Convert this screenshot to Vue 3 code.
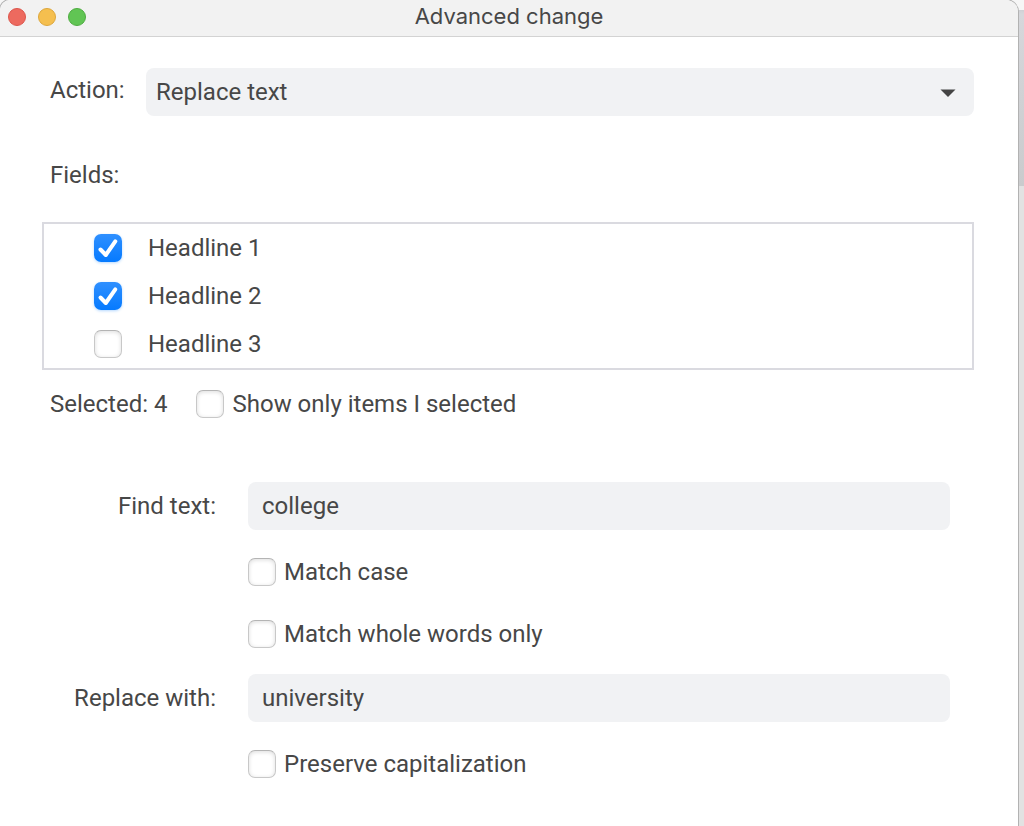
<script setup>
import { ref, reactive } from 'vue'

const action = ref('Replace text')
const fields = reactive([
  { id: 'headline-1', label: 'Headline 1', checked: true },
  { id: 'headline-2', label: 'Headline 2', checked: true },
  { id: 'headline-3', label: 'Headline 3', checked: false },
])
const selectedCount = ref(4)
const onlySelected = ref(false)
const findText = ref('college')
const matchCase = ref(false)
const wholeWords = ref(false)
const replaceWith = ref('university')
const preserveCaps = ref(false)
</script>

<template>
  <div class="desktop">
    <main class="window">
      <header class="titlebar">
        <div class="lights">
          <button class="light close" type="button" aria-label="Close"></button>
          <button class="light minimize" type="button" aria-label="Minimize"></button>
          <button class="light zoom" type="button" aria-label="Zoom"></button>
        </div>
        <h1 class="title">Advanced change</h1>
      </header>

      <form class="content" @submit.prevent>
        <div class="action-row">
          <label class="action-label" for="action">Action:</label>
          <div class="select-box">
            <select id="action" v-model="action">
              <option>Replace text</option>
            </select>
            <svg class="arrow" viewBox="0 0 16 8" aria-hidden="true">
              <path d="M0.500 0.500h15L8 8z" fill="#444" />
            </svg>
          </div>
        </div>

        <h2 class="fields-label" id="fields-label">Fields:</h2>

        <div class="list" role="group" aria-labelledby="fields-label">
          <label v-for="field in fields" :key="field.id" class="list-row" :for="field.id">
            <span class="tick">
              <input :id="field.id" v-model="field.checked" type="checkbox" />
              <svg viewBox="0 0 28 28" aria-hidden="true"><path d="M6.500 15.500L11.800 21L21.300 7.300" /></svg>
            </span>
            {{ field.label }}
          </label>
        </div>

        <div class="selected-row">
          <span>Selected: {{ selectedCount }}</span>
          <label class="check" for="only-selected">
            <span class="tick">
              <input id="only-selected" v-model="onlySelected" type="checkbox" />
              <svg viewBox="0 0 28 28" aria-hidden="true"><path d="M6.500 15.500L11.800 21L21.300 7.300" /></svg>
            </span>
            Show only items I selected
          </label>
        </div>

        <div class="form-grid">
          <label class="form-label" for="find-text">Find text:</label>
          <input id="find-text" v-model="findText" class="text-input" type="text" />
          <div class="options">
            <label class="check" for="match-case">
              <span class="tick">
                <input id="match-case" v-model="matchCase" type="checkbox" />
                <svg viewBox="0 0 28 28" aria-hidden="true"><path d="M6.500 15.500L11.800 21L21.300 7.300" /></svg>
              </span>
              Match case
            </label>
            <label class="check" for="whole-words">
              <span class="tick">
                <input id="whole-words" v-model="wholeWords" type="checkbox" />
                <svg viewBox="0 0 28 28" aria-hidden="true"><path d="M6.500 15.500L11.800 21L21.300 7.300" /></svg>
              </span>
              Match whole words only
            </label>
          </div>

          <label class="form-label" for="replace-with">Replace with:</label>
          <input id="replace-with" v-model="replaceWith" class="text-input" type="text" />
          <div class="options">
            <label class="check" for="preserve-caps">
              <span class="tick">
                <input id="preserve-caps" v-model="preserveCaps" type="checkbox" />
                <svg viewBox="0 0 28 28" aria-hidden="true"><path d="M6.500 15.500L11.800 21L21.300 7.300" /></svg>
              </span>
              Preserve capitalization
            </label>
          </div>
        </div>
      </form>
    </main>
  </div>
</template>

<style>
body {
  margin: 0;
  background: #e4e4e4;
}
</style>

<style scoped>
.desktop {
  box-sizing: border-box;
  min-height: 100vh;
  padding-right: 6px;
  display: flex;
  background: linear-gradient(#f6f6f6 10px, #cfd0d4 10px, #d6d7db 14px, #cacbcd 186px, #e2e2e2 186px);
  font-family: Roboto, "Liberation Sans", sans-serif;
  font-size: 24px;
  line-height: 28px;
  color: #474747;
}

.window {
  flex: 1;
  min-width: 0;
  background: #fff;
  border-radius: 10px 12px 0 0;
  box-shadow: 0 0 0 1px #b2b2b2;
  overflow: hidden;
}

.titlebar {
  box-sizing: border-box;
  height: 37px;
  padding: 0 8px 2px;
  display: grid;
  grid-template-columns: 1fr auto 1fr;
  align-items: center;
  background: #f2f2f2;
  border-bottom: 1px solid #d3d3d3;
}

.lights {
  display: flex;
  gap: 12px;
}

.light {
  box-sizing: border-box;
  width: 18px;
  height: 18px;
  padding: 0;
  border: 1px solid;
  border-radius: 50%;
}

.close {
  background: #ed6a5f;
  border-color: #dc554b;
}

.minimize {
  background: #f5bf4f;
  border-color: #dca63b;
}

.zoom {
  background: #61c554;
  border-color: #4eac41;
}

.title {
  margin: 0;
  padding-bottom: 2px;
  font-family: Inter, "Liberation Sans", sans-serif;
  font-size: 22px;
  line-height: 28px;
  font-weight: 400;
}

.content {
  padding: 31px 44px 48px 42px;
}

.action-row {
  display: flex;
  align-items: center;
}

.action-label {
  box-sizing: border-box;
  width: 104px;
  padding: 0 0 4px 8px;
}

.select-box {
  flex: 1;
  display: grid;
  align-items: center;
}

.select-box > * {
  grid-area: 1 / 1;
}

select {
  appearance: none;
  width: 100%;
  height: 48px;
  margin: 0;
  padding: 0 48px 0 10px;
  border: 0;
  border-radius: 8px;
  background: #f1f2f4;
  color: inherit;
  font: inherit;
}

.arrow {
  width: 16px;
  height: 8px;
  justify-self: end;
  margin: 2px 18px 0 0;
  pointer-events: none;
}

.fields-label {
  margin: 45px 0 33px;
  padding-left: 8px;
  font-size: 24px;
  font-weight: 400;
}

.list {
  border: 2px solid #dadae0;
}

.list-row {
  height: 48px;
  padding-left: 50px;
  display: flex;
  align-items: center;
  gap: 26px;
}

.tick {
  flex: none;
  width: 28px;
  height: 28px;
  display: grid;
}

.tick > * {
  grid-area: 1 / 1;
}

.tick input {
  appearance: none;
  box-sizing: border-box;
  width: 28px;
  height: 28px;
  margin: 0;
  border: 1px solid #c8c8c8;
  border-top-color: #b4b4b4;
  border-radius: 7px;
  background: #fff;
  box-shadow: inset 0 1px 4px #dcdcdc;
}

.tick input:checked {
  border: 0;
  background: linear-gradient(#2f90ff, #057aff);
  box-shadow: 0 1px 3px #b5d8ff;
}

.tick svg {
  width: 28px;
  height: 28px;
  visibility: hidden;
  pointer-events: none;
  fill: none;
  stroke: #fff;
  stroke-width: 4;
  stroke-linecap: round;
  stroke-linejoin: round;
}

.tick input:checked + svg {
  visibility: visible;
}

.selected-row {
  display: flex;
  align-items: center;
  gap: 29px;
  padding: 20px 0 0 8px;
}

.check {
  display: flex;
  align-items: center;
  gap: 8px;
}

.form-grid {
  margin: 64px 24px 0 0;
  display: grid;
  grid-template-columns: 174px 1fr;
  column-gap: 32px;
  align-items: center;
}

.form-label {
  text-align: right;
}

.text-input {
  box-sizing: border-box;
  width: 100%;
  height: 48px;
  padding: 0 14px;
  border: 0;
  border-radius: 8px;
  background: #f1f2f4;
  color: inherit;
  font: inherit;
}

.options {
  grid-column: 2;
  display: flex;
  flex-direction: column;
  gap: 34px;
  padding: 28px 0 26px;
}
</style>
